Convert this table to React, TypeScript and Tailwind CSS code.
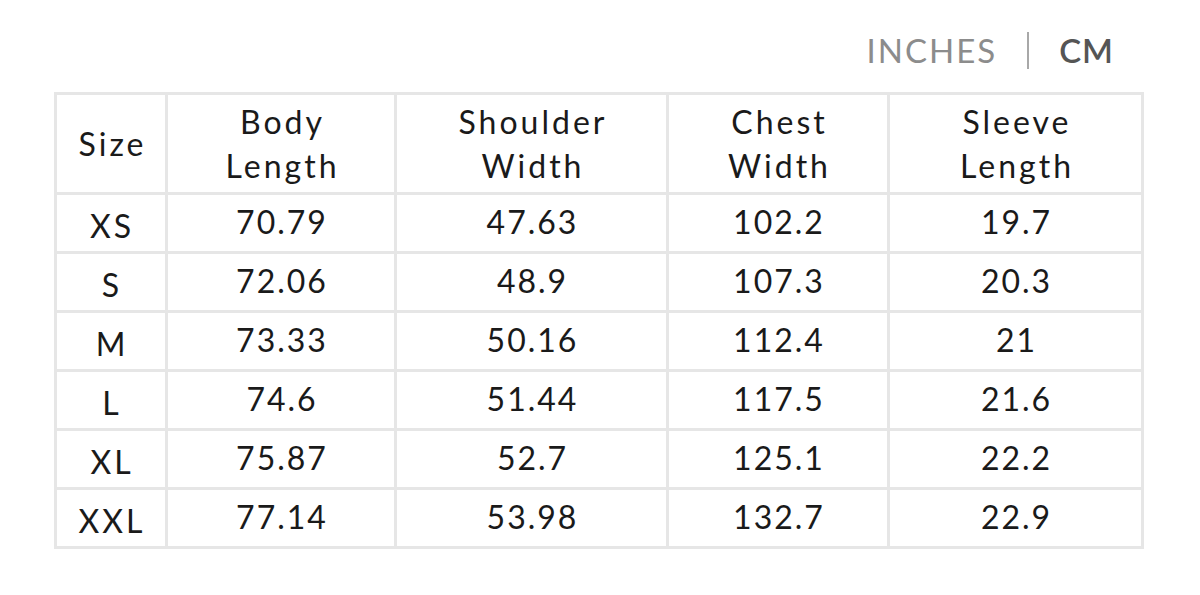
import React from "react";

const rows = [
  ["XS", "70.79", "47.63", "102.2", "19.7"],
  ["S", "72.06", "48.9", "107.3", "20.3"],
  ["M", "73.33", "50.16", "112.4", "21"],
  ["L", "74.6", "51.44", "117.5", "21.6"],
  ["XL", "75.87", "52.7", "125.1", "22.2"],
  ["XXL", "77.14", "53.98", "132.7", "22.9"],
];

const headers: string[][] = [
  ["Size"],
  ["Body", "Length"],
  ["Shoulder", "Width"],
  ["Chest", "Width"],
  ["Sleeve", "Length"],
];

export default function App() {
  return (
    <div
      className="w-[1200px] h-[595px] bg-white text-[#1a1a1a]"
      style={{ fontFamily: "Lato, 'Noto Sans', sans-serif" }}
    >
      <div className="flex justify-end items-center pt-[24px] pr-[86px] h-[92px] pb-[16px]">
        <span className="text-[33px] text-[#8c8c8c] leading-none tracking-[2px]">INCHES</span>
        <span className="mx-[30px] w-[2px] h-[37px] bg-[#a8a8a8]"></span>
        <span className="text-[33px] text-[#555555] leading-none font-semibold tracking-[1px]">CM</span>
      </div>
      <div className="ml-[54px] w-[1090px] bg-[#e6e6e6] p-[3px] grid grid-cols-[108px_226px_269px_218px_251px] grid-rows-[97px_repeat(6,56px)] gap-[3px]">
        {headers.map((h, i) => (
          <div
            key={i}
            className="bg-white flex flex-col items-center justify-center text-[32px] leading-[44px] tracking-[3px] pl-[3px]"
          >
            {h.map((l) => (
              <span key={l}>{l}</span>
            ))}
          </div>
        ))}
        {rows.map((r) =>
          r.map((c, j) => (
            <div
              key={r[0] + j}
              className={`bg-white flex items-center justify-center text-[32px] leading-none pl-[2px] ${
                j === 0 ? "tracking-[3px] pt-[6px]" : "tracking-[2px] pb-[2px]"
              }`}
            >
              {c}
            </div>
          ))
        )}
      </div>
    </div>
  );
}
